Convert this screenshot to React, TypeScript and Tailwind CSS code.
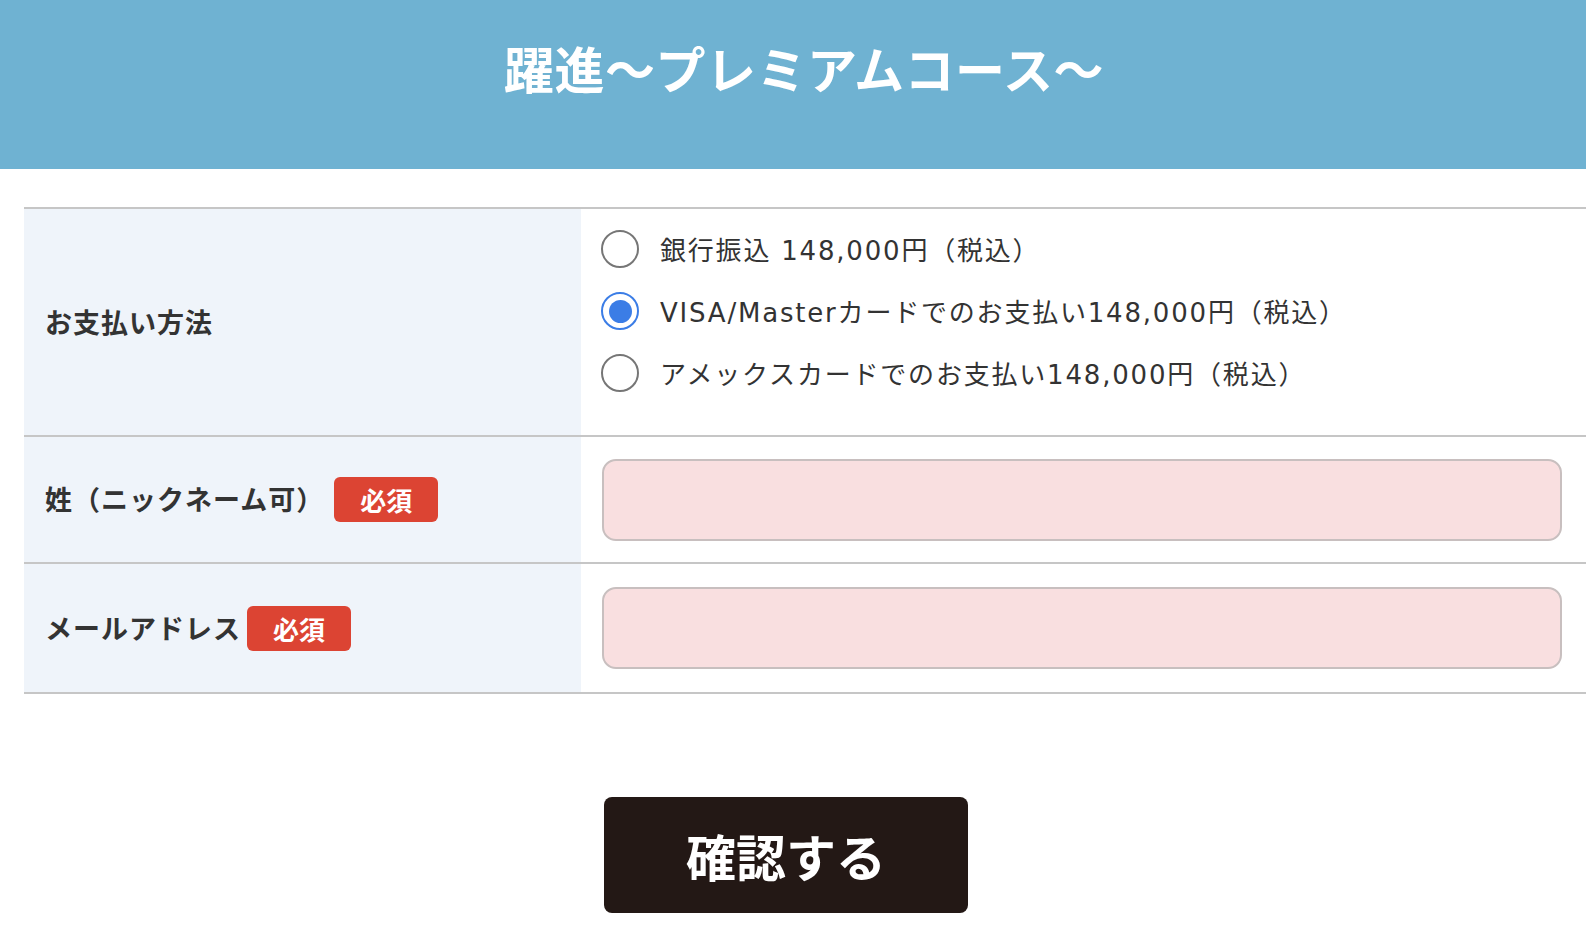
import React, { useState } from "react";

const font = { fontFamily: '"Noto Sans CJK JP", "Noto Sans", sans-serif' };
const optionFont = { fontFamily: '"DejaVu Sans", "Noto Sans CJK JP", sans-serif' };

const options = [
  "銀行振込 148,000円（税込）",
  "VISA/Masterカードでのお支払い148,000円（税込）",
  "アメックスカードでのお支払い148,000円（税込）",
];

function Badge() {
  return (
    <span className="ml-[10px] flex h-[45px] w-[104px] items-center justify-center rounded-[6px] bg-[#dc4433] text-[26px] font-bold tracking-normal text-white">
      必須
    </span>
  );
}

export default function App() {
  const [method, setMethod] = useState(1);

  return (
    <div className="min-h-[936px] w-full overflow-hidden bg-white text-[#333]" style={font}>
      <header className="flex h-[169px] items-center justify-center bg-[#6fb2d2] pb-[36px] pl-[22px]">
        <h1 className="text-[50px] font-bold leading-none tracking-[0.5px] text-white">躍進～プレミアムコース～</h1>
      </header>

      <div className="ml-[24px] mt-[38px] border-t-2 border-[#c6c6c6]">
        <div className="flex h-[228px] border-b-2 border-[#c6c6c6]">
          <div className="flex w-[557px] shrink-0 items-center bg-[#eff4fa] pl-[21px] text-[27px] font-bold tracking-[1px]">
            お支払い方法
          </div>
          <div className="flex flex-col pl-[20px] pt-[9px]">
            {options.map((label, i) => (
              <label
                key={label}
                className="flex h-[62px] cursor-pointer items-center"
                onClick={() => setMethod(i)}
              >
                <span
                  className={
                    i === method
                      ? "flex h-[38px] w-[38px] items-center justify-center rounded-full border-2 border-[#3b7de6] bg-white"
                      : "flex h-[38px] w-[38px] items-center justify-center rounded-full border-2 border-[#767676] bg-white"
                  }
                >
                  {i === method && <span className="h-[23px] w-[23px] rounded-full bg-[#3b7de6]" />}
                </span>
                <span className="ml-[21px] pt-[4px] text-[26px] leading-none tracking-[1.8px]" style={optionFont}>
                  {label}
                </span>
              </label>
            ))}
          </div>
        </div>

        <div className="flex h-[127px] border-b-2 border-[#c6c6c6]">
          <div className="flex w-[557px] shrink-0 items-center bg-[#eff4fa] pl-[21px] text-[27px] font-bold tracking-[1px]">
            姓（ニックネーム可）
            <Badge />
          </div>
          <div className="flex flex-1 items-center pl-[21px] pr-[24px]">
            <input className="h-[82px] w-full rounded-[14px] border-2 border-[#c8bfbf] bg-[#f9dfe0] px-4 text-[24px] outline-none" />
          </div>
        </div>

        <div className="flex h-[130px] border-b-2 border-[#c6c6c6]">
          <div className="flex w-[557px] shrink-0 items-center bg-[#eff4fa] pl-[21px] text-[27px] font-bold tracking-[1px]">
            メールアドレス
            <span className="-ml-[4px] flex">
              <Badge />
            </span>
          </div>
          <div className="flex flex-1 items-center pl-[21px] pr-[24px]">
            <input className="h-[82px] w-full rounded-[14px] border-2 border-[#c8bfbf] bg-[#f9dfe0] px-4 text-[24px] outline-none" />
          </div>
        </div>
      </div>

      <div className="flex justify-center pr-[14px] pt-[103px]">
        <button
          type="button"
          className="flex h-[116px] w-[364px] items-center justify-center rounded-[8px] bg-[#231815] text-[50px] font-bold text-white"
        >
          確認する
        </button>
      </div>
    </div>
  );
}
